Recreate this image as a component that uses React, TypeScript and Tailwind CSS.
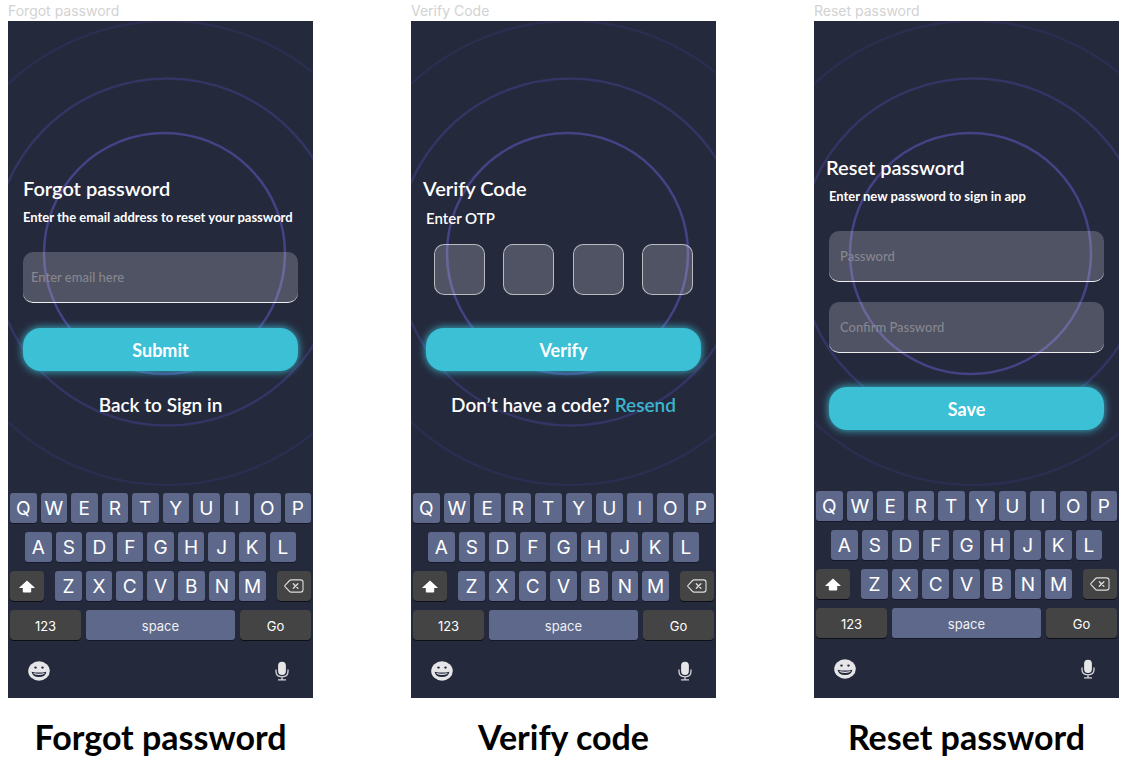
import type { ReactNode } from "react";

const rows = ["QWERTYUIOP", "ASDFGHJKL", "ZXCVBNM"];

const letterKey =
  "h-[30px] min-w-0 flex-1 rounded-[3px] bg-[#5d688b] pt-[2px] font-[Inter,sans-serif] text-[19px] leading-[28px] text-white shadow-[0_1px_0_#15182a]";
const darkKey =
  "flex h-[30px] items-center justify-center rounded-[4px] bg-[#444444] text-white shadow-[0_1px_0_#0c0e18]";
const wideText = "pt-[3px] font-[Inter,sans-serif] text-[13px] leading-[27px] text-[#f0f0f2]";

function Letters({ row }: { row: string }) {
  return (
    <>
      {row.split("").map((letter) => (
        <button key={letter} type="button" className={letterKey}>
          {letter}
        </button>
      ))}
    </>
  );
}

function ShiftIcon() {
  return (
    <svg viewBox="0 0 16 13" className="h-[13px] w-4" fill="currentColor" aria-hidden="true">
      <path d="M8 .4 15.6 7.4Q16 8 15.2 8H12.2V11.4Q12.2 12.4 11.2 12.4H4.8Q3.8 12.4 3.8 11.4V8H.8Q0 8 .4 7.4Z" />
    </svg>
  );
}

function BackspaceIcon() {
  return (
    <svg viewBox="0 0 20 14" className="h-[14px] w-5" fill="none" stroke="#dcdcdc" strokeWidth="1.1" strokeLinecap="round" strokeLinejoin="round" aria-hidden="true">
      <path d="M7 .9H16.6Q19 .9 19 3.2V10.8Q19 13.1 16.6 13.1H7Q6.2 13.1 5.6 12.5L1 7.6Q.5 7 1 6.4L5.6 1.5Q6.2.9 7 .9Z" />
      <path d="m9.3 4.7 4.6 4.6m0-4.6L9.3 9.3" strokeWidth="1.3" />
    </svg>
  );
}

function EmojiIcon() {
  return (
    <svg viewBox="0 0 22 20" className="h-5 w-[22px]" aria-hidden="true">
      <ellipse cx="11" cy="10" rx="10.8" ry="9.7" fill="#e6e6e8" />
      <ellipse cx="7.5" cy="6.6" rx="1.3" ry="1.1" fill="#24293c" />
      <ellipse cx="14.5" cy="6.6" rx="1.3" ry="1.1" fill="#24293c" />
      <path d="M3.6 10.7Q11 12.4 18.4 10.7 17.6 16 11 16T3.6 10.7Z" fill="#24293c" />
      <path d="M5 12.1Q11 13.5 17 12.1 16 14 11 14T5 12.1Z" fill="#e6e6e8" />
    </svg>
  );
}

function MicIcon() {
  return (
    <svg viewBox="0 0 14 20" className="h-5 w-[14px]" fill="none" stroke="#d6d6da" aria-hidden="true">
      <rect x="3.1" y=".8" width="7.8" height="13.2" rx="3.9" fill="#e6e6e8" stroke="none" />
      <path d="M1 8.5V10.6Q1 15.8 7 15.8T13 10.6V8.5M7 15.8V18.6M3 18.8H11" strokeWidth="1.3" />
    </svg>
  );
}

function Keyboard() {
  return (
    <div className="flex flex-col gap-[9px] px-[2px]">
      <div className="flex gap-1">
        <Letters row={rows[0]} />
      </div>
      <div className="flex gap-1 px-[15px]">
        <Letters row={rows[1]} />
      </div>
      <div className="flex">
        <button type="button" aria-label="Shift" className={`${darkKey} w-[34px]`}>
          <ShiftIcon />
        </button>
        <div className="flex flex-1 gap-1 px-[11px]">
          <Letters row={rows[2]} />
        </div>
        <button type="button" aria-label="Backspace" className={`${darkKey} w-[34px]`}>
          <BackspaceIcon />
        </button>
      </div>
      <div className="flex gap-[5px]">
        <button type="button" className={`${darkKey} ${wideText} w-[71px]`}>
          123
        </button>
        <button type="button" className={`h-[30px] flex-1 rounded-[3px] bg-[#5d688b] shadow-[0_1px_0_#15182a] ${wideText}`}>
          space
        </button>
        <button type="button" className={`${darkKey} ${wideText} w-[71px]`}>
          Go
        </button>
      </div>
      <div className="flex justify-between pt-3 pr-[22px] pb-[17px] pl-[18px]">
        <button type="button" aria-label="Emoji">
          <EmojiIcon />
        </button>
        <button type="button" aria-label="Dictate">
          <MicIcon />
        </button>
      </div>
    </div>
  );
}

function Rings() {
  return (
    <svg className="absolute inset-0 h-full w-full" fill="none" strokeWidth="2.5" aria-hidden="true">
      <circle cx="159" cy="232" r="232" stroke="#2c2e50" />
      <circle cx="159" cy="231" r="173.5" stroke="#343564" />
      <circle cx="156.5" cy="232.5" r="120.5" stroke="#464286" />
    </svg>
  );
}

function Artboard({ label, caption, children }: { label: string; caption: string; children: ReactNode }) {
  return (
    <section className="flex flex-col">
      <p className="h-[21px] font-[Inter,sans-serif] text-[14px] leading-[21px] text-[#d2d2d2]">{label}</p>
      <div className="relative flex-1 overflow-hidden bg-[#25293c]">
        <Rings />
        <div className="relative">
          {children}
          <Keyboard />
        </div>
      </div>
      <h2 className="pt-[17px] text-center text-[34px] leading-[44px] font-bold text-black">{caption}</h2>
    </section>
  );
}

const field =
  "block h-[51px] w-full rounded-[10px] border-b border-white/90 bg-white/20 text-[13px] font-medium text-white outline-none placeholder:text-[#858690]";

function SubmitButton({ children }: { children: ReactNode }) {
  return (
    <button
      type="submit"
      className="block h-[43px] w-full rounded-[18px] bg-[#3bc0d6] pt-[2px] text-[18px] font-bold text-white shadow-[0_0_8px_#3bc0d6]"
    >
      {children}
    </button>
  );
}

export default function App() {
  return (
    <main className="grid min-h-screen grid-cols-3 content-start gap-[98px] bg-white pr-[6px] pl-2 font-[Lato,sans-serif]">
      <Artboard label="Forgot password" caption="Forgot password">
        <form className="px-[15px] pt-[155px] pb-[76px]" onSubmit={(e) => e.preventDefault()}>
          <h1 className="text-[20px] leading-6 font-semibold text-white">Forgot password</h1>
          <label htmlFor="email" className="mt-[7px] block text-[13px] leading-5 font-bold whitespace-nowrap text-white">
            Enter the email address to reset your password
          </label>
          <input id="email" type="email" placeholder="Enter email here" className={`${field} mt-[25px] mb-[25px] px-2`} />
          <SubmitButton>Submit</SubmitButton>
          <p className="mt-[22px] text-center text-[19px] leading-6 font-semibold text-white">
            <a href="#sign-in">Back to Sign in</a>
          </p>
        </form>
      </Artboard>

      <Artboard label="Verify Code" caption="Verify code">
        <form className="px-[15px] pt-[155px] pb-[76px]" onSubmit={(e) => e.preventDefault()}>
          <h1 className="-ml-[3px] text-[20px] leading-6 font-semibold text-white">Verify Code</h1>
          <p id="otp" className="mt-2 text-[15px] leading-5 font-semibold text-white">
            Enter OTP
          </p>
          <div role="group" aria-labelledby="otp" className="mt-4 mb-[33px] flex justify-between px-2">
            {[1, 2, 3, 4].map((digit) => (
              <input
                key={digit}
                aria-label={`Digit ${digit}`}
                inputMode="numeric"
                maxLength={1}
                className="h-[51px] w-[51px] rounded-[10px] border border-white/60 bg-white/20 text-center text-[20px] text-white outline-none"
              />
            ))}
          </div>
          <SubmitButton>Verify</SubmitButton>
          <p className="mt-[22px] text-center text-[19px] leading-6 font-semibold whitespace-nowrap text-white">
            Don’t have a code?{" "}
            <a href="#resend" className="text-[#3bb5cc]">
              Resend
            </a>
          </p>
        </form>
      </Artboard>

      <Artboard label="Reset password" caption="Reset password">
        <form className="px-[15px] pt-[134px] pb-[61px]" onSubmit={(e) => e.preventDefault()}>
          <h1 className="-ml-[3px] text-[20px] leading-6 font-semibold text-white">Reset password</h1>
          <p className="mt-[7px] text-[13px] leading-5 font-bold text-white">Enter new password to sign in app</p>
          <input type="password" aria-label="Password" placeholder="Password" className={`${field} mt-[25px] px-[11px]`} />
          <input type="password" aria-label="Confirm Password" placeholder="Confirm Password" className={`${field} mt-5 mb-[34px] px-[11px]`} />
          <SubmitButton>Save</SubmitButton>
        </form>
      </Artboard>
    </main>
  );
}
